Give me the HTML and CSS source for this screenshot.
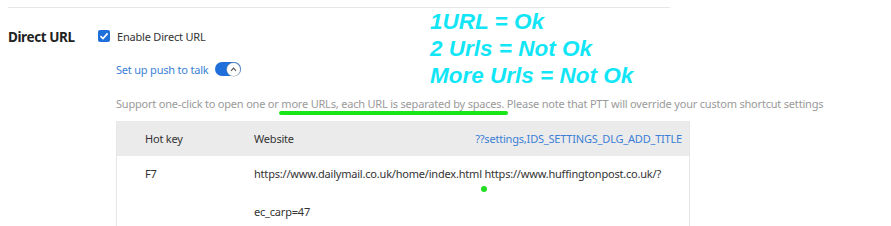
FILE: index.html
```html
<!DOCTYPE html>
<html>
<head>
<meta charset="utf-8">
<link rel="stylesheet" href="styles.css">
</head>
<body>
<div class="page">
  <div class="rule"></div>
  <div class="section">
    <div class="label">Direct URL</div>
    <div class="content">
      <label class="check-row">
        <span class="checkbox"><svg width="12" height="12" viewBox="0 0 12 12"><path d="M2.5 6.2 L5 8.6 L9.6 3.4" fill="none" stroke="#fff" stroke-width="1.6"/></svg></span>
        <span class="check-text">Enable Direct URL</span>
      </label>
      <div class="ptt-row">
        <span class="ptt-link">Set up push to talk</span>
        <span class="toggle"><span class="knob"><svg width="9" height="9" viewBox="0 0 9 9"><path d="M2 5.8 L4.5 3.2 L7 5.8" fill="none" stroke="#555" stroke-width="1.2"/></svg></span></span>
      </div>
      <div class="desc">Support one-click to open one or <span class="hl">more URLs, each URL is separated by spaces.</span> Please note that PTT will override your custom shortcut settings</div>
      <div class="table">
        <div class="thead">
          <div class="c-key">Hot key</div>
          <div class="c-site">Website</div>
          <div class="c-add">??settings,IDS_SETTINGS_DLG_ADD_TITLE</div>
        </div>
        <div class="trow">
          <div class="c-key">F7</div>
          <div class="c-site">https://www.dailymail.co.uk/home/index.html <span class="dotwrap">https://www.huffingtonpost.co.uk/?<span class="dot"></span></span><br>ec_carp=47</div>
        </div>
      </div>
    </div>
  </div>
  <div class="note">
    <div>1URL = Ok</div>
    <div>2 Urls = Not Ok</div>
    <div>More Urls = Not Ok</div>
  </div>
</div>
</body>
</html>
```
FILE: styles.css
```css
html, body {
  margin: 0;
  padding: 0;
  background: #fff;
  overflow: hidden;
}
body {
  font-family: "Noto Sans", "Open Sans", sans-serif;
  font-size: 11px;
  letter-spacing: -0.2px;
  color: #333;
}
.page {
  position: relative;
  width: 891px;
  height: 226px;
}
.rule {
  margin: 7px 0 0 8px;
  width: 662px;
  height: 1px;
  background: #e6e6e6;
}
.section {
  display: flex;
  padding-left: 8px;
  padding-top: 18px;
}
.label {
  width: 90px;
  flex: none;
  font-size: 13.5px;
  font-weight: bold;
  letter-spacing: -0.4px;
  color: #222;
  padding-top: 2px;
}
.content {
  display: flex;
  flex-direction: column;
}
.check-row {
  display: flex;
  align-items: center;
  gap: 7px;
  height: 20px;
}
.checkbox {
  width: 12px;
  height: 12px;
  background: #1e6fd9;
  border-radius: 2px;
  display: flex;
}
.check-text {
  color: #333;
}
.ptt-row {
  display: flex;
  align-items: center;
  gap: 6px;
  margin-top: 14px;
  margin-left: 18px;
  height: 18px;
}
.ptt-link {
  color: #3b7fd6;
}
.toggle {
  width: 25px;
  height: 14px;
  border-radius: 8px;
  background: #1e6fd9;
  display: flex;
  justify-content: flex-end;
  align-items: center;
  padding-right: 1px;
}
.knob {
  width: 13px;
  height: 13px;
  border-radius: 50%;
  background: #fff;
  display: flex;
  align-items: center;
  justify-content: center;
  box-shadow: 0 0 0 0.5px #aaa;
}
.desc {
  margin-top: 18px;
  margin-left: 18px;
  color: #9a9a9a;
  white-space: nowrap;
  position: relative;
}
.hl {
  position: relative;
}
.hl::after {
  content: "";
  position: absolute;
  left: -2px;
  right: -4px;
  bottom: -4px;
  height: 4px;
  border-radius: 2px;
  background: #19e619;
}
.table {
  margin-top: 10px;
  margin-left: 18px;
  width: 572px;
  border-left: 1px solid #e6e6e6;
  border-right: 1px solid #e6e6e6;
}
.thead {
  display: flex;
  align-items: center;
  height: 35px;
  background: #ebebeb;
}
.c-key {
  width: 137px;
  padding-left: 28px;
  box-sizing: border-box;
  flex: none;
}
.c-site {
  flex: 1;
}
.c-add {
  color: #3b7fd6;
  padding-right: 7px;
}
.trow {
  display: flex;
  line-height: 38px;
  margin-top: -1px;
}
.dotwrap {
  position: relative;
}
.dot {
  position: absolute;
  left: -3px;
  top: 20px;
  width: 6px;
  height: 6px;
  border-radius: 50%;
  background: #22dd22;
}
.note {
  position: absolute;
  left: 430px;
  top: 1px;
  font-family: "Liberation Sans", Arial, sans-serif;
  font-weight: bold;
  font-style: italic;
  font-size: 22.5px;
  letter-spacing: 0;
  line-height: 27px;
  color: #12e6f6;
}
```
